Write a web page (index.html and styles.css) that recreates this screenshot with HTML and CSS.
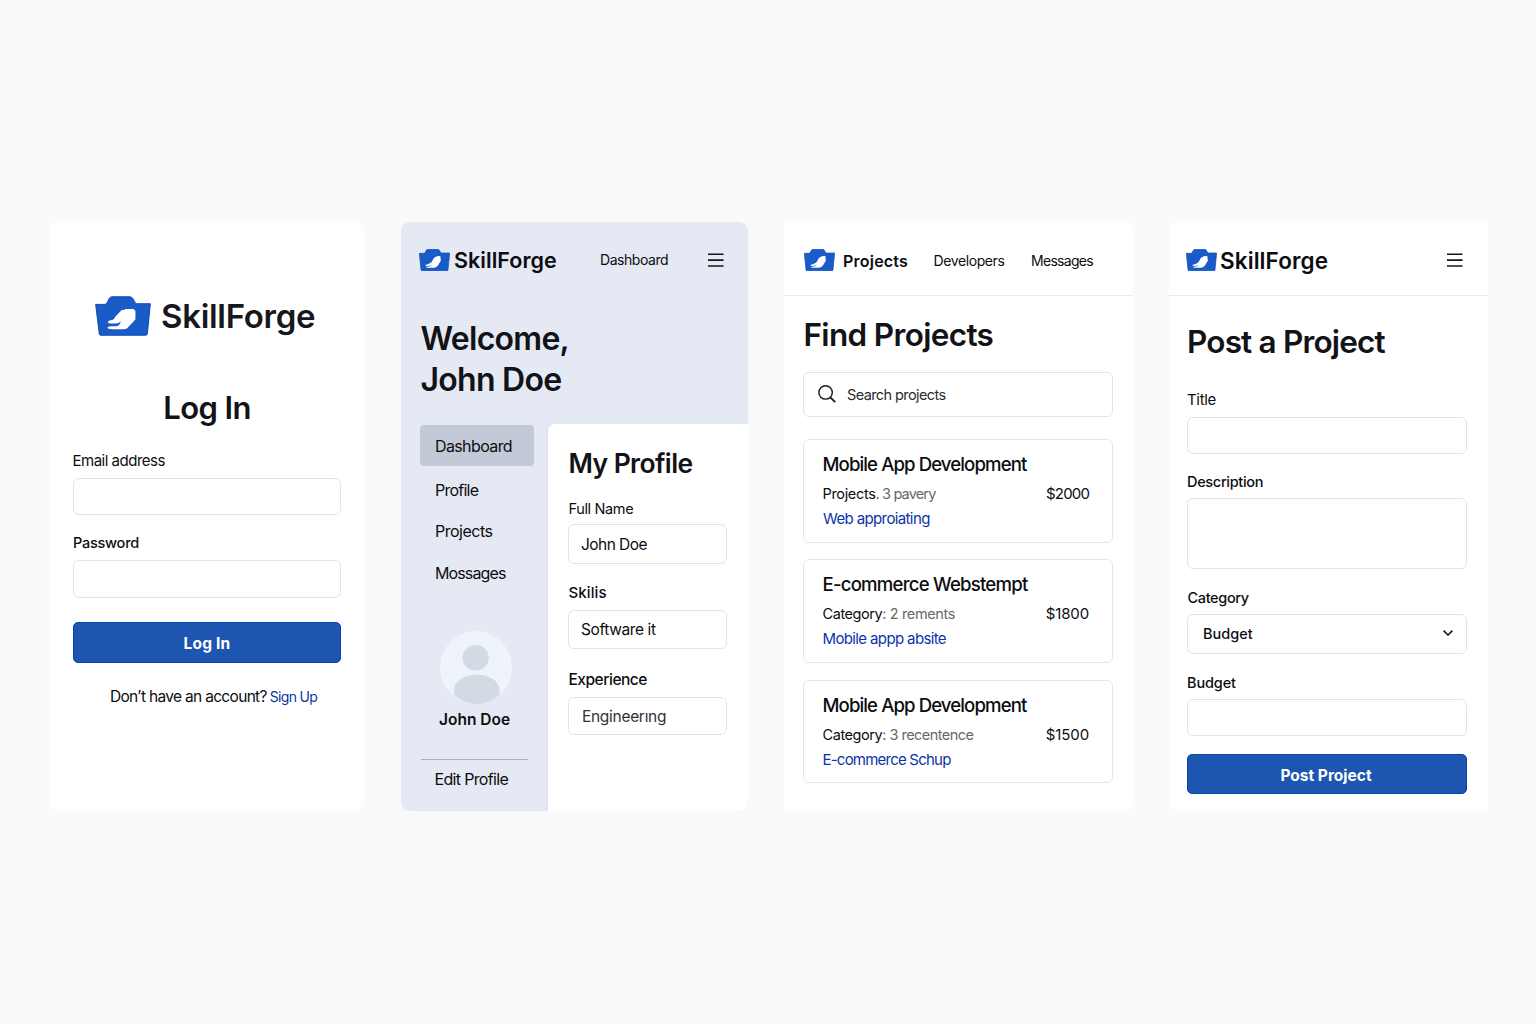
FILE: index.html
```html
<!DOCTYPE html>
<html lang="en">
<head>
<meta charset="utf-8">
<title>SkillForge</title>
<link rel="stylesheet" href="styles.css">
</head>
<body>
<svg class="defs" aria-hidden="true">
  <symbol id="logo" viewBox="45 48 169 120">
    <path fill="#195bc7" stroke="#0d49b5" stroke-width="3" stroke-linejoin="round" d="M47 73H74Q79 73 81 69L88 55Q91 50 97 50H150Q156 50 159 55L166 67Q168 71 173 71H212L203 162Q202 166 198 166H63Q59 166 58 162Z"/>
    <path fill="#fff" d="M125 91L128 89L131 91L137 87H162L167 93V118L162 124L142 145Q139 148 131 148H97Q83 148 83 143Q84 139 97 139H110Q120 138 123 124Q117 131 108 131H90Q84 130 84 126Q85 121 97 120Q103 119 106 110Z"/>
  </symbol>
  <symbol id="logo-small" viewBox="73 101 93 66">
    <path fill="#195bc7" stroke="#0d49b5" stroke-width="2" stroke-linejoin="round" d="M74 114H88Q91 114 92 111L95 105Q97 102 100 102H129Q133 102 134 105L137 110Q138 113 141 113H165L160 163Q160 166 157 166H82Q79 166 79 163Z"/>
    <path fill="#fff" d="M137 122L126 123Q116 127 113 136Q109 145 92 149Q91 152 97 152Q106 152 112 148Q107 155 95 154Q93 157 98 157.500H117Q127 157 132 147L138.500 136Z"/>
  </symbol>
  <symbol id="menu" viewBox="0 0 16 14">
    <path stroke="#15171c" stroke-width="1.6" d="M0 1.2H15.600M0 7.1H15.600M0 13H15.600"/>
  </symbol>
</svg>
<main class="board">

  <section class="panel login">
    <div class="brand brand-lg">
      <svg class="logo-lg"><use href="#logo"/></svg>
      <span class="wordmark">SkillForge</span>
    </div>
    <h1 class="login-title">Log In</h1>
    <label class="t email-label">Email address</label>
    <div class="field email"></div>
    <label class="t pass-label">Password</label>
    <div class="field pass"></div>
    <div class="button login-btn">Log In</div>
    <p class="signup"><span class="t ask">Don’t have an account?</span><a class="t join">Sign Up</a></p>
  </section>

  <section class="panel dash">
    <header class="dash-head">
      <div class="brand"><svg class="logo"><use href="#logo-small"/></svg><span class="wordmark">SkillForge</span></div>
      <a class="t nav-link">Dashboard</a>
      <svg class="menu"><use href="#menu"/></svg>
    </header>
    <h1 class="welcome"><span>Welcome,</span><br>John Doe</h1>
    <div class="dash-body">
      <nav class="side">
        <a class="t side-link active">Dashboard</a>
        <a class="t side-link profile">Profile</a>
        <a class="t side-link projects">Projects</a>
        <a class="t side-link messages">Mossages</a>
        <svg class="avatar" viewBox="0 0 72 73">
          <ellipse cx="36" cy="36.5" rx="36" ry="36.5" fill="#eff3fa"/>
          <ellipse cx="35.6" cy="26.7" rx="13.2" ry="12.8" fill="#d2dae4"/>
          <path fill="#d2dae4" d="M14.2 64V59C14.2 50 24 43.8 36.5 43.8S59.6 50 59.6 59V64A36 36.5 0 0 1 36 73A36 36.5 0 0 1 14.2 64Z"/>
        </svg>
        <span class="t user">John Doe</span>
        <hr class="rule">
        <a class="t edit">Edit Profile</a>
      </nav>
      <div class="profile-card">
        <h2 class="profile-title">My Profile</h2>
        <label class="t name-label">Full Name</label>
        <div class="field name"><span class="t">John Doe</span></div>
        <label class="t skills-label">Skilis</label>
        <div class="field skills"><span class="t">Software it</span></div>
        <label class="t exp-label">Experience</label>
        <div class="field exp"><span class="t">Engineerıng</span></div>
      </div>
    </div>
  </section>

  <section class="panel find">
    <header class="find-head">
      <svg class="logo"><use href="#logo-small"/></svg>
      <a class="t tab current">Projects</a>
      <a class="t tab devs">Developers</a>
      <a class="t tab msgs">Messages</a>
    </header>
    <div class="find-body">
      <h1 class="find-title">Find Projects</h1>
      <div class="field search">
        <svg class="glass" viewBox="0 0 18 18"><circle cx="7.6" cy="7.4" r="6.7"/><path d="M12.3 12.3L17.2 17.2"/></svg>
        <span class="t">Search projects</span>
      </div>
      <div class="cards">
        <article class="card">
          <h3 class="t card-title">Mobile App Development</h3>
          <div class="meta"><span class="t key k1">Projects</span><span class="t val v1">. 3 pavery</span><span class="t price">$2000</span></div>
          <a class="t link l1">Web approiating</a>
        </article>
        <article class="card">
          <h3 class="t card-title web">E-commerce Webstempt</h3>
          <div class="meta"><span class="t key">Category</span><span class="t val v2">: 2 rements</span><span class="t price p2">$1800</span></div>
          <a class="t link l2">Mobile appp absite</a>
        </article>
        <article class="card">
          <h3 class="t card-title">Mobile App Development</h3>
          <div class="meta"><span class="t key">Category</span><span class="t val v3">: 3 recentence</span><span class="t price p2">$1500</span></div>
          <a class="t link l3">E-commerce Schup</a>
        </article>
      </div>
    </div>
  </section>

  <section class="panel post">
    <header class="post-head">
      <div class="brand"><svg class="logo"><use href="#logo-small"/></svg><span class="wordmark">SkillForge</span></div>
      <svg class="menu"><use href="#menu"/></svg>
    </header>
    <div class="post-body">
      <h1 class="post-title">Post a Project</h1>
      <label class="t title-label">Title</label>
      <div class="field title-field"></div>
      <label class="t desc-label">Description</label>
      <div class="field desc"></div>
      <label class="t cat-label">Category</label>
      <div class="field select"><span class="t">Budget</span>
        <svg class="chevron" viewBox="0 0 10 6"><path d="M.6.6L5 5L9.4.6"/></svg>
      </div>
      <label class="t budget-label">Budget</label>
      <div class="field budget"></div>
      <div class="button post-btn">Post Project</div>
    </div>
  </section>

</main>
</body>
</html>
```
FILE: styles.css
```css
* { box-sizing: border-box; }

body {
  margin: 0;
  min-height: 1024px;
  background: #fafafa;
  color: #0c0d10;
  font-family: Inter, "Liberation Sans", sans-serif;
  font-size: 15px;
  line-height: 20px;
}

h1, h2, h3, p { margin: 0; }
svg { display: block; flex: none; }
.defs { position: absolute; width: 0; height: 0; }

.board { display: flex; padding: 221px 0 0 49px; }

.panel {
  height: 590px;
  border-radius: 9px;
  background: #fff;
  display: flex;
  flex-direction: column;
  overflow: hidden;
}

.t { display: block; line-height: 20px; white-space: nowrap; }
h1, h2 { line-height: 40px; font-weight: 600; white-space: nowrap; color: #121317; }

.brand { display: flex; }
.wordmark { font-weight: 600; line-height: 22px; white-space: nowrap; }
.logo { width: 31px; height: 22px; }
.menu { width: 16px; height: 14px; margin-top: 4px; }

.field {
  border: 1px solid #dbe4f1;
  border-radius: 6px;
  background: #fff;
  display: flex;
  align-items: center;
  flex: none;
}

.button {
  height: 40px;
  padding-top: 3px;
  border: 1px solid #0a41a8;
  border-radius: 5px;
  background: #1d55b0;
  color: #fff;
  font-size: 15.5px;
  font-weight: 700;
  display: flex;
  align-items: center;
  justify-content: center;
  flex: none;
}

/* Log in */
.login { width: 315px; padding: 75px 23px 0 24px; }
.brand-lg { gap: 10px; margin-left: 22px; }
.logo-lg { width: 56px; height: 40px; }
.brand-lg .wordmark { margin-top: 1px; font-size: 33px; line-height: 39px; letter-spacing: -.29px; color: #17181c; }
.login-title { margin-top: 52px; font-size: 31px; letter-spacing: -.6px; text-align: center; }
.email-label { margin: 23px 0 7px -.5px; font-size: 15px; letter-spacing: -.49px; }
.email { height: 37px; }
.pass-label { margin: 18px 0 7px; font-size: 14.5px; font-weight: 500; letter-spacing: -.25px; }
.pass { height: 38px; }
.login-btn { margin-top: 24px; height: 41px; padding-top: 2px; letter-spacing: .2px; }
.signup { display: flex; gap: 3px; margin: 24px 0 0 37px; }
.ask { font-size: 15.5px; letter-spacing: -.68px; }
.join { font-size: 14px; letter-spacing: -.68px; color: #0a34a8; }

/* Dashboard */
.dash { width: 347px; height: 589px; margin: 1px 0 0 37px; background: #e5e9f4; }
.dash-head { display: flex; padding: 27px 24px 0 18px; }
.dash .brand { gap: 4px; width: 181px; }
.dash .wordmark { font-size: 21.5px; letter-spacing: .05px; }
.nav-link { margin-top: 1px; font-size: 14px; letter-spacing: -.45px; }
.dash .menu { margin-left: auto; }
.welcome { margin: 47px 0 0 19.5px; font-size: 32px; line-height: 41px; font-weight: 570; letter-spacing: -.73px; }
.dash-body { display: flex; margin-top: 24px; flex: 1; }
.side { width: 147px; padding: 1px 13px 0 19px; display: flex; flex-direction: column; border-right: 1px solid #dbe3f1; }
.side-link, .edit { font-size: 16px; margin-left: 15px; }
.active { height: 41px; margin-left: 0; padding: 11px 0 0 15px; border-radius: 4px; background: #c3cad7; letter-spacing: -.62px; }
.profile { margin-top: 14px; letter-spacing: -.75px; }
.projects { margin-top: 21px; letter-spacing: -.5px; }
.messages { margin-top: 22px; letter-spacing: -.88px; }
.avatar { width: 72px; height: 73px; margin: 48px 0 6px 19.5px; }
.user { margin-left: 19px; font-size: 15.5px; font-weight: 600; }
.rule { width: 107px; height: 1px; margin: 29px 0 9px 1px; border: 0; background: #a9b0bf; flex: none; }
.edit { margin-left: 14.5px; letter-spacing: -.67px; }
.profile-card { flex: 1; padding: 19px 21px 0 20px; border-top-left-radius: 7px; background: #fff; }
.profile-title { margin-left: .5px; font-size: 26.5px; letter-spacing: -.6px; }
.name-label { margin: 16px 0 5px .5px; font-size: 14.5px; letter-spacing: -.35px; }
.profile-card .field { padding-left: 12px; font-size: 15.5px; }
.name { height: 40px; padding-top: 1px; letter-spacing: -.55px; }
.skills-label { margin: 19px 0 7px .5px; font-weight: 550; letter-spacing: .1px; }
.skills { height: 39px; padding-top: 1px; letter-spacing: -.39px; }
.exp-label { margin: 21px 0 7px .5px; font-size: 15.5px; font-weight: 500; letter-spacing: -.48px; }
.exp { height: 38px; padding-top: 1px; letter-spacing: -.3px; color: #303236; }
.exp .t { margin-left: 1px; }

/* Find projects */
.find { width: 349px; margin-left: 36px; }
.find-head { display: flex; height: 75px; padding: 28px 0 0 19.5px; border-bottom: 1px solid #e6ecf5; }
.tab { margin-top: 2px; font-size: 14px; }
.current { width: 90.5px; margin-left: 8.5px; font-size: 16px; font-weight: 600; letter-spacing: .22px; }
.devs { width: 97.5px; letter-spacing: -.4px; }
.msgs { letter-spacing: -.7px; }
.find-body { padding: 19px 20px 0 19px; }
.find-title { margin-left: .5px; font-size: 31.5px; letter-spacing: -.66px; }
.search { height: 45px; margin-top: 17px; padding: 0 0 0 14px; gap: 11px; font-size: 14.5px; letter-spacing: -.6px; color: #2a2c30; }
.glass { width: 18px; height: 18px; margin-bottom: 1px; fill: none; stroke: #17191d; stroke-width: 1.4; }
.glass path { stroke-width: 1.9; }
.cards { display: flex; flex-direction: column; gap: 16.7px; margin-top: 22px; }
.card { height: 103.6px; padding: 14px 23px 0 18.5px; border: 1px solid #e0e7f3; border-radius: 6px; }
.card-title { font-size: 18.6px; font-weight: 500; letter-spacing: -.9px; }
.web { letter-spacing: -.79px; }
.meta { display: flex; margin: 10px 0 5px; font-size: 14.5px; }
.key { letter-spacing: -.42px; }
.k1 { letter-spacing: -.33px; }
.val { color: #66686d; white-space: pre; }
.v1 { letter-spacing: -.85px; }
.v2 { letter-spacing: -.38px; }
.v3 { letter-spacing: -.54px; }
.price { margin-left: auto; font-size: 15px; letter-spacing: -.85px; }
.p2 { letter-spacing: -.12px; }
.link { font-size: 15px; color: #0a34a8; }
.l1 { margin-left: .5px; letter-spacing: -.62px; }
.l2 { letter-spacing: -.63px; }
.l3 { letter-spacing: -.78px; }

/* Post a project */
.post { width: 319px; margin-left: 36px; }
.post-head { display: flex; justify-content: space-between; height: 75px; padding: 28px 25px 0 17px; border-bottom: 1px solid #e6ecf5; }
.post .brand { gap: 3px; }
.post .wordmark { margin-top: 1px; font-size: 22.5px; letter-spacing: .1px; }
.post-body { padding: 26px 21px 0 18px; }
.post-title { font-size: 31.5px; letter-spacing: -.82px; }
.title-label { margin: 28px 0 7px; letter-spacing: -.34px; }
.title-field { height: 37px; }
.desc-label { margin: 18px 0 6px; font-size: 14.5px; font-weight: 500; letter-spacing: -.32px; }
.desc { height: 71px; }
.cat-label { margin: 19px 0 6px .5px; font-size: 14.5px; font-weight: 500; letter-spacing: -.35px; }
.select { height: 40px; padding: 0 13px 0 15px; justify-content: space-between; font-size: 14.5px; font-weight: 500; }
.chevron { width: 10px; height: 6px; margin-bottom: 2px; fill: none; stroke: #15171c; stroke-width: 1.5; }
.budget-label { margin: 19px 0 6px; font-size: 14.5px; font-weight: 500; letter-spacing: -.14px; }
.budget { height: 37px; }
.post-btn { margin-top: 18px; padding-right: 2px; }
```
